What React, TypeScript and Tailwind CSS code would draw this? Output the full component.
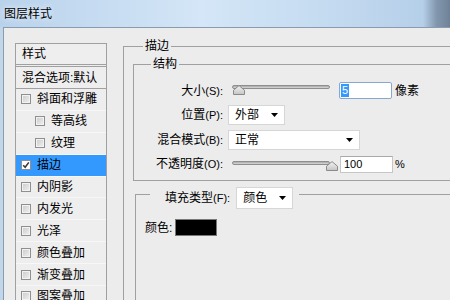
import React from 'react';

const font = '"Liberation Sans", "Noto Sans CJK SC", sans-serif';

type StyleItem = { name: string; indent?: boolean; checked?: boolean; active?: boolean };

const styleItems: StyleItem[] = [
  { name: '斜面和浮雕' },
  { name: '等高线', indent: true },
  { name: '纹理', indent: true },
  { name: '描边', checked: true, active: true },
  { name: '内阴影' },
  { name: '内发光' },
  { name: '光泽' },
  { name: '颜色叠加' },
  { name: '渐变叠加' },
  { name: '图案叠加' },
];

const CheckBox = ({ checked }: { checked?: boolean }) => (
  <span className={`w-[10px] h-[10px] shrink-0 border border-[#8f8f8f] flex items-center justify-center ${checked ? 'bg-white' : 'bg-[#f2f2f2]'}`}>
    {checked ? (
      <svg width="8" height="8" viewBox="0 0 8 8">
        <path d="M1.2 4.2 L3.2 6.3 L6.8 1.4" fill="none" stroke="#3a3a3a" strokeWidth="1.6" />
      </svg>
    ) : (
      <span className="w-[6px] h-[6px] bg-gradient-to-br from-[#cfcfcf] to-[#ececec]" />
    )}
  </span>
);

const Label = ({ cn, k }: { cn: string; k: string }) => (
  <span className="w-[89px] shrink-0 text-right leading-[14px] whitespace-nowrap">
    {cn}
    <span className="text-[11px]">({k}):</span>
  </span>
);

const Arrow = () => (
  <svg width="7" height="4" viewBox="0 0 7 4" className="shrink-0">
    <polygon points="0,0 7,0 3.5,4" fill="#000" />
  </svg>
);

const Select = ({ value, className }: { value: string; className: string }) => (
  <div className={`bg-white border border-[#d6d6d6] flex items-center justify-between pl-[6px] pr-[6px] ${className}`}>
    <span className="leading-[14px]">{value}</span>
    <Arrow />
  </div>
);

const Thumb = () => (
  <svg width="12" height="10" viewBox="0 0 12 10">
    <defs>
      <linearGradient id="tg" x1="0" y1="0" x2="0" y2="1">
        <stop offset="0" stopColor="#f4f4f4" />
        <stop offset="1" stopColor="#c4c4c4" />
      </linearGradient>
    </defs>
    <path d="M0.5 9.5 V5.2 L6 0.6 L11.5 5.2 V9.5 Z" fill="url(#tg)" stroke="#8a8a8a" />
  </svg>
);

const Slider = ({ thumb, className }: { thumb: 'start' | 'end'; className: string }) => (
  <div className={`relative w-[98px] h-[4px] shrink-0 rounded-full border border-[#8e8e8e] bg-gradient-to-b from-[#a9a9a9] to-[#d9d9d9] ${className}`}>
    <div className={`absolute top-[-1px] ${thumb === 'start' ? 'left-0' : 'left-[93px]'}`}>
      <Thumb />
    </div>
  </div>
);

export default function App() {
  return (
    <div className="w-[450px] h-[300px] overflow-hidden bg-[#c2d6ea] text-[12px] text-black" style={{ fontFamily: font }}>
      {/* title bar */}
      <div className="h-[27px] flex items-center pl-[4px] bg-[linear-gradient(90deg,#b9d2eb_0%,#c8ddf2_25%,#d4e6f7_45%,#c6dcf1_70%,#b6cfe9_94%,#8297ad_97%,#6e8197_100%)]">
        <span className="leading-[14px] [text-shadow:0_0_6px_#ffffff]">图层样式</span>
      </div>

      {/* client area */}
      <div className="ml-[3px] h-[273px] border-l border-t border-[#8a9bb0] bg-[#ececec] flex overflow-hidden">
        {/* style list */}
        <div className="ml-[11px] mt-[15px] w-[92px] h-[300px] shrink-0 border border-[#a0a0a0] bg-[#eeeeee]">
          <div className="h-[23px] border-b-[3px] border-double border-[#a0a0a0] flex items-center pl-[6px]">
            <span className="leading-[14px]">样式</span>
          </div>
          <div className="h-[22px] border-b border-[#a0a0a0] flex items-center pl-[6px] whitespace-nowrap">
            <span className="leading-[14px]">混合选项:默认</span>
          </div>
          {styleItems.map((s) => (
            <div
              key={s.name}
              className={`h-[21.9px] flex items-center gap-[6px] whitespace-nowrap border-b border-[#f7f7f7] ${s.indent ? 'pl-[19px]' : 'pl-[5px]'} ${s.active ? 'bg-[#3399ff]' : ''}`}
            >
              <CheckBox checked={s.checked} />
              <span className="leading-[14px]">{s.name}</span>
            </div>
          ))}
        </div>

        {/* stroke settings */}
        <div className="ml-[16px] mt-[11px] shrink-0">
          <fieldset className="w-[340px] h-[300px] border border-[#a0a0a0]">
            <legend className="ml-[19px] px-[2px] leading-[14px]">描边</legend>

            <fieldset className="ml-[9px] mt-[4px] w-[330px] border border-[#a0a0a0] pt-[7.25px] pb-[3.75px]">
              <legend className="ml-[17px] px-[2px] leading-[14px]">结构</legend>

              <div className="h-[24.5px] flex items-center">
                <Label cn="大小" k="S" />
                <Slider thumb="start" className="ml-[9px] mb-[8px]" />
                <div className="ml-[9px] w-[53px] h-[17px] shrink-0 bg-white border border-[#86a7cf] rounded-[2px] flex items-center pl-[1px]">
                  <span className="bg-[#3399ff] text-white text-[11px] leading-[13px] px-[1px]">5</span>
                </div>
                <span className="ml-[3px] leading-[14px]">像素</span>
              </div>

              <div className="h-[24.5px] flex items-center">
                <Label cn="位置" k="P" />
                <Select value="外部" className="ml-[5px] w-[57px] h-[20px] shrink-0" />
              </div>

              <div className="h-[24.5px] flex items-center">
                <Label cn="混合模式" k="B" />
                <Select value="正常" className="ml-[5px] w-[132px] h-[20px] shrink-0" />
              </div>

              <div className="h-[24.5px] flex items-center">
                <Label cn="不透明度" k="O" />
                <Slider thumb="end" className="ml-[9px] mb-[3px]" />
                <div className="ml-[10px] w-[53px] h-[17px] shrink-0 bg-white border border-[#c6c6c6] border-t-[#a9a9a9] flex items-center pl-[3px]">
                  <span className="text-[11px] leading-[13px]">100</span>
                </div>
                <span className="ml-[2px] text-[11px] leading-[14px]">%</span>
              </div>
            </fieldset>

            <fieldset className="ml-[11px] mt-[6px] w-[330px] h-[120px] border border-[#a0a0a0]">
              <legend className="ml-[14px] pr-[6px] h-[14px] flex items-start">
                <span className="pl-[15px] h-[22px] leading-[22px] whitespace-nowrap">
                  填充类型<span className="text-[11px]">(F):</span>
                </span>
                <Select value="颜色" className="ml-[6px] w-[57px] h-[22px] shrink-0" />
              </legend>

              <div className="mt-[18px] pl-[9px] h-[17px] flex items-center">
                <span className="leading-[14px]">颜色:</span>
                <div className="ml-[3px] w-[42px] h-[17px] bg-black border border-[#777777]" />
              </div>
            </fieldset>
          </fieldset>
        </div>
      </div>
    </div>
  );
}
